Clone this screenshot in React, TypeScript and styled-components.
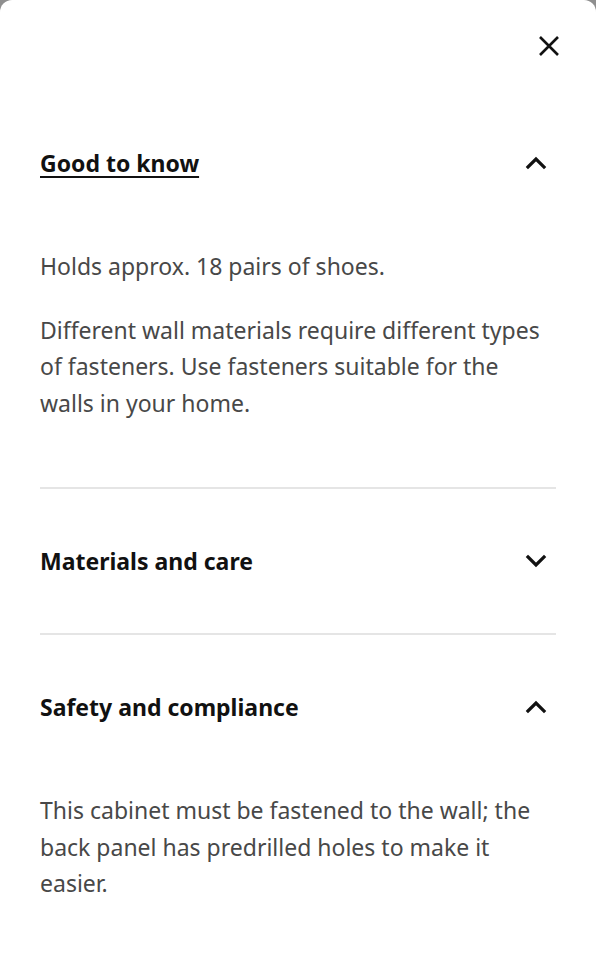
import React from "react";
import styled, { createGlobalStyle } from "styled-components";

const Global = createGlobalStyle`
  html, body { margin: 0; padding: 0; background: #8f8f8f; }
  body { font-family: "Noto Sans", "Open Sans", sans-serif; }
`;

const Sheet = styled.div`
  background: #fff;
  border-radius: 12px 12px 0 0;
  min-height: 960px;
  box-sizing: border-box;
  padding: 0 40px;
  display: flex;
  flex-direction: column;
`;

const TopBar = styled.div`
  display: flex;
  justify-content: flex-end;
  height: 91px;
  align-items: center;
  margin-right: -7px;
`;

const IconButton = styled.button`
  border: 0;
  background: none;
  padding: 0;
  width: 28px;
  height: 28px;
  display: flex;
  align-items: center;
  justify-content: center;
  color: #111;
`;

const Section = styled.section<{ $divider?: boolean }>`
  border-top: ${(p) => (p.$divider ? "2px solid #e5e5e5" : "none")};
`;

const Header = styled.div`
  display: flex;
  align-items: center;
  justify-content: space-between;
  height: 144px;
`;

const Title = styled.h2<{ $underline?: boolean }>`
  margin: 0;
  font-size: 23px;
  font-weight: 700;
  color: #111;
  text-decoration: ${(p) => (p.$underline ? "underline" : "none")};
  text-decoration-thickness: 2px;
  text-underline-offset: 4px;
`;

const Chevron = styled.span`
  display: flex;
  width: 24px;
  height: 24px;
  align-items: center;
  justify-content: center;
  margin-right: 8px;
`;

const Body = styled.div`
  padding: 13px 0 66px;
  display: flex;
  flex-direction: column;
  gap: 27px;
`;

const Para = styled.p`
  margin: 0;
  font-size: 23px;
  line-height: 36.5px;
  color: #484848;
`;

const ChevronIcon = ({ up }: { up: boolean }) => (
  <svg width="22" height="14" viewBox="0 0 22 14" fill="none">
    <path
      d={up ? "M3 11 L11 3 L19 11" : "M3 3 L11 11 L19 3"}
      stroke="#111"
      strokeWidth="3.2"
      strokeLinecap="square"
      strokeLinejoin="miter"
    />
  </svg>
);

const CloseIcon = () => (
  <svg width="22" height="22" viewBox="0 0 22 22" fill="none">
    <path d="M2 2 L20 20 M20 2 L2 20" stroke="#111" strokeWidth="2.6" />
  </svg>
);

export default function App() {
  return (
    <>
      <Global />
      <Sheet>
        <TopBar>
          <IconButton aria-label="Close">
            <CloseIcon />
          </IconButton>
        </TopBar>
        <Section>
          <Header>
            <Title $underline>Good to know</Title>
            <Chevron>
              <ChevronIcon up />
            </Chevron>
          </Header>
          <Body>
            <Para>Holds approx. 18 pairs of shoes.</Para>
            <Para>
              Different wall materials require different types of fasteners.
              Use fasteners suitable for the walls in your home.
            </Para>
          </Body>
        </Section>
        <Section $divider>
          <Header>
            <Title>Materials and care</Title>
            <Chevron>
              <ChevronIcon up={false} />
            </Chevron>
          </Header>
        </Section>
        <Section $divider>
          <Header>
            <Title>Safety and compliance</Title>
            <Chevron>
              <ChevronIcon up />
            </Chevron>
          </Header>
          <Body>
            <Para>
              This cabinet must be fastened to the wall; the back panel has
              predrilled holes to make it easier.
            </Para>
          </Body>
        </Section>
      </Sheet>
    </>
  );
}
